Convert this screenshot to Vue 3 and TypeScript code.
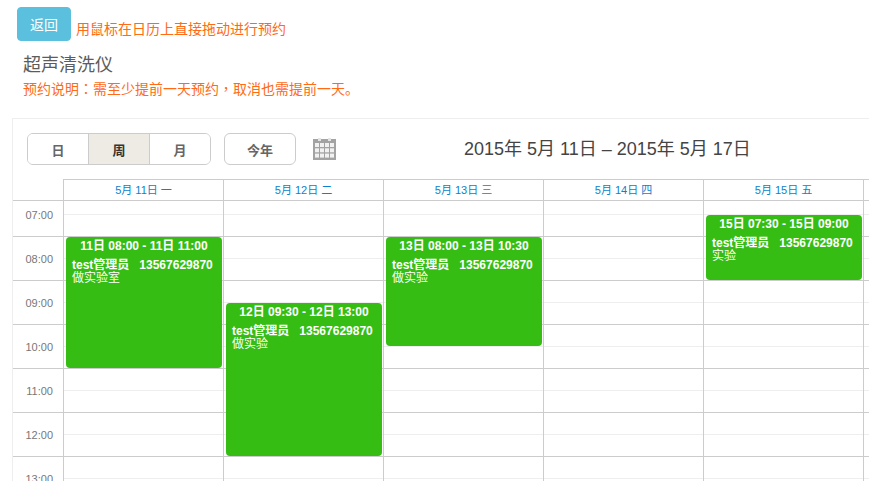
<script setup lang="ts">
interface CalEvent { top: number; height: number; title: string; who: string; note: string }
interface Day { label: string; event?: CalEvent }
const who = 'test管理员\u00a0\u00a0\u00a013567629870'
const days: Day[] = [
  { label: '5月 11日 一', event: { top: 36, height: 131, title: '11日 08:00 - 11日 11:00', who, note: '做实验室' } },
  { label: '5月 12日 二', event: { top: 102, height: 153, title: '12日 09:30 - 12日 13:00', who, note: '做实验' } },
  { label: '5月 13日 三', event: { top: 36, height: 109, title: '13日 08:00 - 13日 10:30', who, note: '做实验' } },
  { label: '5月 14日 四' },
  { label: '5月 15日 五', event: { top: 14, height: 65, title: '15日 07:30 - 15日 09:00', who, note: '实验' } },
  { label: '' },
]
const hours = ['07:00', '08:00', '09:00', '10:00', '11:00', '12:00', '13:00']
</script>

<template>
  <div class="page">
    <div class="top">
      <button class="back">返回</button>
      <span class="hint">用鼠标在日历上直接拖动进行预约</span>
    </div>
    <h3 class="title">超声清洗仪</h3>
    <p class="note">预约说明<span class="punct">：</span>需至少提前一天预约<span class="punct">，</span>取消也需提前一天。</p>

    <section class="cal">
      <div class="toolbar">
        <div class="group">
          <button class="seg">日</button>
          <button class="seg active">周</button>
          <button class="seg">月</button>
        </div>
        <button class="today">今年</button>
        <svg class="icon" width="23" height="22" viewBox="0 0 23 22">
          <rect x="0" y="1" width="23" height="21" fill="#a3a3a3" />
          <rect x="5" y="0" width="3" height="3" fill="#e4e4e4" />
          <rect x="15" y="0" width="3" height="3" fill="#e4e4e4" />
          <g fill="#f1f1f1">
            <template v-for="r in 3" :key="r">
              <rect v-for="c in 4" :key="c" :x="2 + (c - 1) * 5" :y="5 + (r - 1) * 5.3" width="4" height="4" />
            </template>
          </g>
        </svg>
        <h2 class="range">2015年 5月 11日 – 2015年 5月 17日</h2>
      </div>

      <div class="grid">
        <div class="axis">
          <div class="corner"></div>
          <div v-for="(h, i) in hours" :key="h" class="hour" :class="{ first: i === 0 }">{{ h }}</div>
        </div>
        <div v-for="(d, di) in days" :key="di" class="day">
          <div class="head">{{ d.label }}</div>
          <div class="slots">
            <div v-for="(h, i) in hours" :key="h" class="slot" :class="{ first: i === 0 }"></div>
            <div v-if="d.event" class="event" :style="{ top: d.event.top + 'px', height: d.event.height + 'px' }">
              <div class="ev-title">{{ d.event.title }}</div>
              <div class="ev-who">{{ d.event.who }}</div>
              <div class="ev-note">{{ d.event.note }}</div>
            </div>
          </div>
        </div>
      </div>
    </section>
  </div>
</template>

<style>
html, body { margin: 0; background: #fff; overflow: hidden; }
</style>

<style scoped>
.page {
  width: 869px;
  height: 481px;
  overflow: hidden;
  box-sizing: border-box;
  padding-top: 7px;
  font-family: "Liberation Sans", "Noto Sans CJK SC", sans-serif;
  font-size: 14px;
  color: #333;
}
button { font-family: inherit; cursor: pointer; padding: 0; }
.top { display: flex; align-items: flex-end; padding-left: 17px; height: 34px; }
.back {
  width: 54px; height: 34px; border: 1px solid #5bc0de; border-radius: 4px;
  background: #5bc0de; color: #fff; font-size: 14px;
}
.hint { color: #ff6a13; font-size: 14px; line-height: 20px; margin-left: 5px; margin-bottom: 2px; }
.title { margin: 11px 0 0 23px; font-size: 18px; font-weight: 400; line-height: 26px; color: #5c5c5c; }
.note { margin: 0 0 0 23px; font-size: 14px; line-height: 20px; color: #ff6a13; }
.punct { font-family: "Noto Sans CJK TC", sans-serif; }
.cal {
  margin: 19px 0 0 12px;
  width: 900px;
  border: 1px solid #eee;
  border-right: 0;
  box-sizing: border-box;
}
.toolbar { display: flex; align-items: center; height: 60px; padding-left: 14px; }
.group {
  display: flex; width: 184px; height: 32px; box-sizing: border-box;
  border: 1px solid #ccc; border-radius: 6px; overflow: hidden;
}
.seg {
  flex: 1; border: 0; border-left: 1px solid #ccc; background: #fff;
  color: #666; font-size: 13px; font-weight: 700;
}
.seg:first-child { border-left: 0; }
.seg.active { background: #eeebe5; color: #333; }
.today {
  margin-left: 13px; width: 72px; height: 32px; background: #fff;
  border: 1px solid #ccc; border-radius: 6px; color: #666; font-size: 13px; font-weight: 700;
}
.icon { margin-left: 17px; }
.range { margin: 0 0 4px 128px; font-size: 18px; font-weight: 400; color: #444; white-space: nowrap; }
.grid { display: flex; }
.axis { width: 50px; flex: none; }
.corner { height: 22px; border-bottom: 1px solid #ccc; box-sizing: border-box; }
.hour {
  height: 44px; box-sizing: border-box; border-bottom: 1px solid #ccc;
  padding: 14px 10px 0 0; text-align: right; font-size: 11px; line-height: 16px; color: #777;
}
.hour.first { height: 36px; padding-top: 6px; }
.day { width: 160px; flex: none; border-left: 1px solid #ccc; box-sizing: border-box; }
.head {
  height: 22px; box-sizing: border-box; border-top: 1px solid #ccc; border-bottom: 1px solid #ccc;
  text-align: center; font-size: 11px; line-height: 20px; color: #0a82cf;
}
.slots { position: relative; }
.slot {
  height: 44px; box-sizing: border-box; border-bottom: 1px solid #ccc;
  background: linear-gradient(#eee, #eee) 0 21px / 100% 1px no-repeat;
}
.slot.first { height: 36px; background-position: 0 13px; }
.event {
  position: absolute; left: 2px; width: 156px; box-sizing: border-box;
  background: #35bd14; border-radius: 4px; color: #fff; font-size: 12px;
  padding: 0 6px; overflow: hidden;
}
.ev-title { font-weight: 700; text-align: center; line-height: 14px; margin-top: 2px; font-size: 12px; }
.ev-who { font-weight: 700; line-height: 13px; margin-top: 6px; white-space: nowrap; }
.ev-note { line-height: 13px; }
</style>
